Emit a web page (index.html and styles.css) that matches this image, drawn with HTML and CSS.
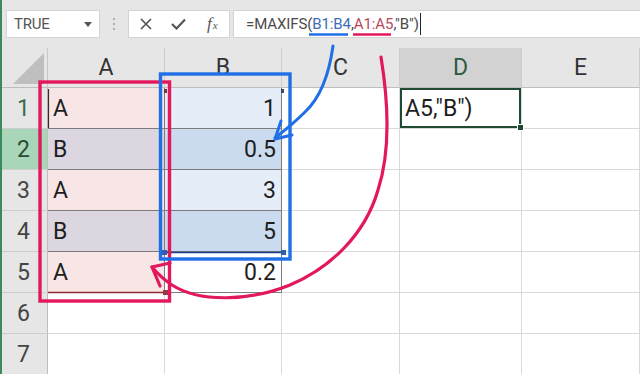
FILE: index.html
```html
<!DOCTYPE html>
<html>
<head>
<meta charset="utf-8">
<link rel="stylesheet" href="styles.css">
</head>
<body>
<div class="app">
  <div class="toolbar">
    <div class="namebox">
      <span class="nb-text">TRUE</span>
      <svg class="nb-caret" width="8" height="5" viewBox="0 0 8 5"><path d="M0 0H8L4 5Z" fill="#555"/></svg>
    </div>
    <div class="grip">
      <svg width="4" height="14" viewBox="0 0 4 14"><circle cx="2" cy="2" r="1.1" fill="#a0a0a0"/><circle cx="2" cy="7" r="1.1" fill="#a0a0a0"/><circle cx="2" cy="12" r="1.1" fill="#a0a0a0"/></svg>
    </div>
    <div class="fbtns">
      <span class="fb"><svg width="12" height="12" viewBox="0 0 12 12"><path d="M1 1L11 11M11 1L1 11" stroke="#555" stroke-width="1.7" fill="none"/></svg></span>
      <span class="fb"><svg width="15" height="12" viewBox="0 0 15 12"><path d="M1 6L5.5 10.5L14 1.5" stroke="#555" stroke-width="2.2" fill="none"/></svg></span>
      <span class="fb fx"><i>f</i><span class="fx-x">x</span></span>
    </div>
    <div class="formula">=MAXIFS(<span class="ref-b">B1:B4</span>,<span class="ref-a">A1:A5</span>,"B")<span class="caret"></span></div>
  </div>
  <div class="grid">
    <div class="corner"><svg width="48" height="40" viewBox="0 0 48 40"><path d="M44 5V36H13Z" fill="#bfbfbf"/></svg></div>
    <div class="ch">A</div><div class="ch">B</div><div class="ch">C</div><div class="ch sel">D</div><div class="ch">E</div>

    <div class="rh r1">1</div><div class="c t pk">A</div><div class="c t bl num">1</div><div class="c"></div><div class="c active">A5,"B")</div><div class="c"></div>
    <div class="rh hl">2</div><div class="c t pk2">B</div><div class="c t bl2 num">0.5</div><div class="c"></div><div class="c"></div><div class="c"></div>
    <div class="rh">3</div><div class="c t pk">A</div><div class="c t bl num">3</div><div class="c"></div><div class="c"></div><div class="c"></div>
    <div class="rh">4</div><div class="c t pk2">B</div><div class="c t bl2 num">5</div><div class="c"></div><div class="c"></div><div class="c"></div>
    <div class="rh">5</div><div class="c t pk">A</div><div class="c t num">0.2</div><div class="c"></div><div class="c"></div><div class="c"></div>
    <div class="rh">6</div><div class="c"></div><div class="c"></div><div class="c"></div><div class="c"></div><div class="c"></div>
    <div class="rh">7</div><div class="c"></div><div class="c"></div><div class="c"></div><div class="c"></div><div class="c"></div>
  </div>
  <svg class="annot" width="640" height="374" viewBox="0 0 640 374">
    <!-- Excel reference outlines -->
    <path d="M48.5 89V128" stroke="#3a2a2a" stroke-width="1.2"/>
    <path d="M48 292.5H165" stroke="#8c2a35" stroke-width="1.3"/>
    <rect x="163" y="290" width="5" height="5" fill="#9c3a45"/>
    <rect x="164" y="89" width="3" height="4" fill="#6a3a40"/>
    <path d="M165 252.5H283" stroke="#1f3f8f" stroke-width="1.3"/>
    <rect x="162" y="250" width="5" height="5" fill="#2f5fa8"/>
    <rect x="281" y="250" width="5" height="5" fill="#2f5fa8"/>
    <rect x="281" y="89" width="3" height="4" fill="#3a4a6a"/>
    <!-- hand-drawn annotations -->
    <path d="M309 34.5H348" stroke="#1f6fe6" stroke-width="2.6"/>
    <path d="M353 34.5H391" stroke="#e3185c" stroke-width="2.6"/>
    <rect x="40" y="82" width="129.5" height="219" fill="none" stroke="#e3185c" stroke-width="3.4"/>
    <rect x="160.5" y="74" width="129.5" height="185" fill="none" stroke="#1f6fe6" stroke-width="3.4"/>
    <path d="M333 46C329 75 320 98 305 112C294 123 284 131 275 138" fill="none" stroke="#1f6fe6" stroke-width="3" stroke-linecap="round"/>
    <path d="M281 121L275 139L292 135" fill="none" stroke="#1f6fe6" stroke-width="3" stroke-linecap="round" stroke-linejoin="round"/>
    <path d="M381 57C388 100 391 150 378 190C365 235 330 268 290 285C250 301 200 303 172 285C163 279 157 273 152 267" fill="none" stroke="#e3185c" stroke-width="3.2" stroke-linecap="round"/>
    <path d="M170 263L152 267L160 286" fill="none" stroke="#e3185c" stroke-width="3.2" stroke-linecap="round" stroke-linejoin="round"/>
  </svg>
</div>
</body>
</html>
```

FILE: styles.css
```css
* { box-sizing: border-box; }
body {
  margin: 0;
  width: 640px;
  height: 374px;
  overflow: hidden;
  background: #fff;
  font-family: Roboto, "Liberation Sans", sans-serif;
  color: #222;
}
.app {
  position: relative;
  width: 640px;
  height: 374px;
  overflow: hidden;
}
.app::before {
  content: "";
  position: absolute;
  left: 0;
  top: 0;
  width: 2px;
  height: 374px;
  background: #3a8a5a;
  z-index: 3;
}
.toolbar {
  height: 48px;
  background: #e6e6e6;
  display: flex;
  align-items: flex-start;
  padding: 10px 0 0 6px;
}
.namebox {
  width: 94px;
  height: 28px;
  background: #fff;
  border: 1px solid #d4d4d4;
  display: flex;
  align-items: center;
  justify-content: space-between;
  padding: 0 7px 0 7px;
}
.nb-text {
  font-size: 15px;
  color: #555;
  letter-spacing: -0.2px;
}
.grip {
  width: 28px;
  height: 28px;
  display: flex;
  align-items: center;
  justify-content: center;
}
.fbtns {
  width: 102px;
  height: 28px;
  background: #fff;
  border: 1px solid #d4d4d4;
  display: grid;
  grid-template-columns: repeat(3, 1fr);
  align-items: center;
  justify-items: center;
}
.fb { display: flex; align-items: center; justify-content: center; }
.fx {
  font-family: "Liberation Serif", serif;
  font-size: 17px;
  color: #555;
  align-items: baseline;
}
.fx i { font-style: italic; }
.fx-x { font-size: 11px; font-style: italic; margin-left: 1px; }
.formula {
  flex: 1;
  margin-left: 3px;
  height: 28px;
  background: #fff;
  border: 1px solid #d4d4d4;
  border-right: none;
  display: flex;
  align-items: center;
  padding-left: 12px;
  font-size: 15px;
  color: #4a4a4a;
  letter-spacing: -0.1px;
  white-space: pre;
}
.ref-b { color: #3d6eb3; }
.ref-a { color: #b8475a; }
.caret {
  display: inline-block;
  width: 1px;
  height: 22px;
  background: #222;
  margin-left: 1px;
}
.grid {
  display: grid;
  grid-template-columns: 48px 117px 117px 118px 122px 118px;
  grid-template-rows: 40px repeat(7, 41px);
  font-size: 23px;
}
.corner {
  background: #e6e6e6;
  border-right: 1px solid #c8c8c8;
  border-bottom: 1px solid #bdbdbd;
}
.corner svg { display: block; }
.ch {
  background: #e6e6e6;
  border-right: 1px solid #cdcdcd;
  border-bottom: 1px solid #bdbdbd;
  display: flex;
  align-items: center;
  justify-content: center;
  color: #333;
}
.ch.sel {
  background: #d2d2d2;
  color: #2e5a42;
}
.rh {
  background: #e6e6e6;
  border-right: 1px solid #bdbdbd;
  border-bottom: 1px solid #cdcdcd;
  display: flex;
  align-items: center;
  justify-content: center;
  color: #444;
  padding-top: 1px;
}
.rh.r1 { color: #3b6a50; }
.rh.hl { background: #a9d6b9; color: #2a4a36; }
.c {
  border-right: 1px solid #d9d9d9;
  border-bottom: 1px solid #d9d9d9;
  display: flex;
  align-items: center;
  padding: 1px 5px 0 5px;
  color: #1e1e1e;
  white-space: nowrap;
}
.c.t {
  border-right-color: #7c7c7c;
  border-bottom-color: #7c7c7c;
}
.num { justify-content: flex-end; }
.pk { background: #f8e6e7; }
.pk2 { background: #dbd6e0; }
.bl { background: #e5edf8; }
.bl2 { background: #cbdbef; }
.active {
  position: relative;
  box-shadow: inset 0 0 0 2px #1f4a31;
}
.active::after {
  content: "";
  position: absolute;
  right: -3px;
  bottom: -3px;
  width: 5px;
  height: 5px;
  background: #1f4a31;
  border: 1px solid #fff;
}
.annot {
  position: absolute;
  left: 0;
  top: 0;
  z-index: 2;
  pointer-events: none;
}
```
